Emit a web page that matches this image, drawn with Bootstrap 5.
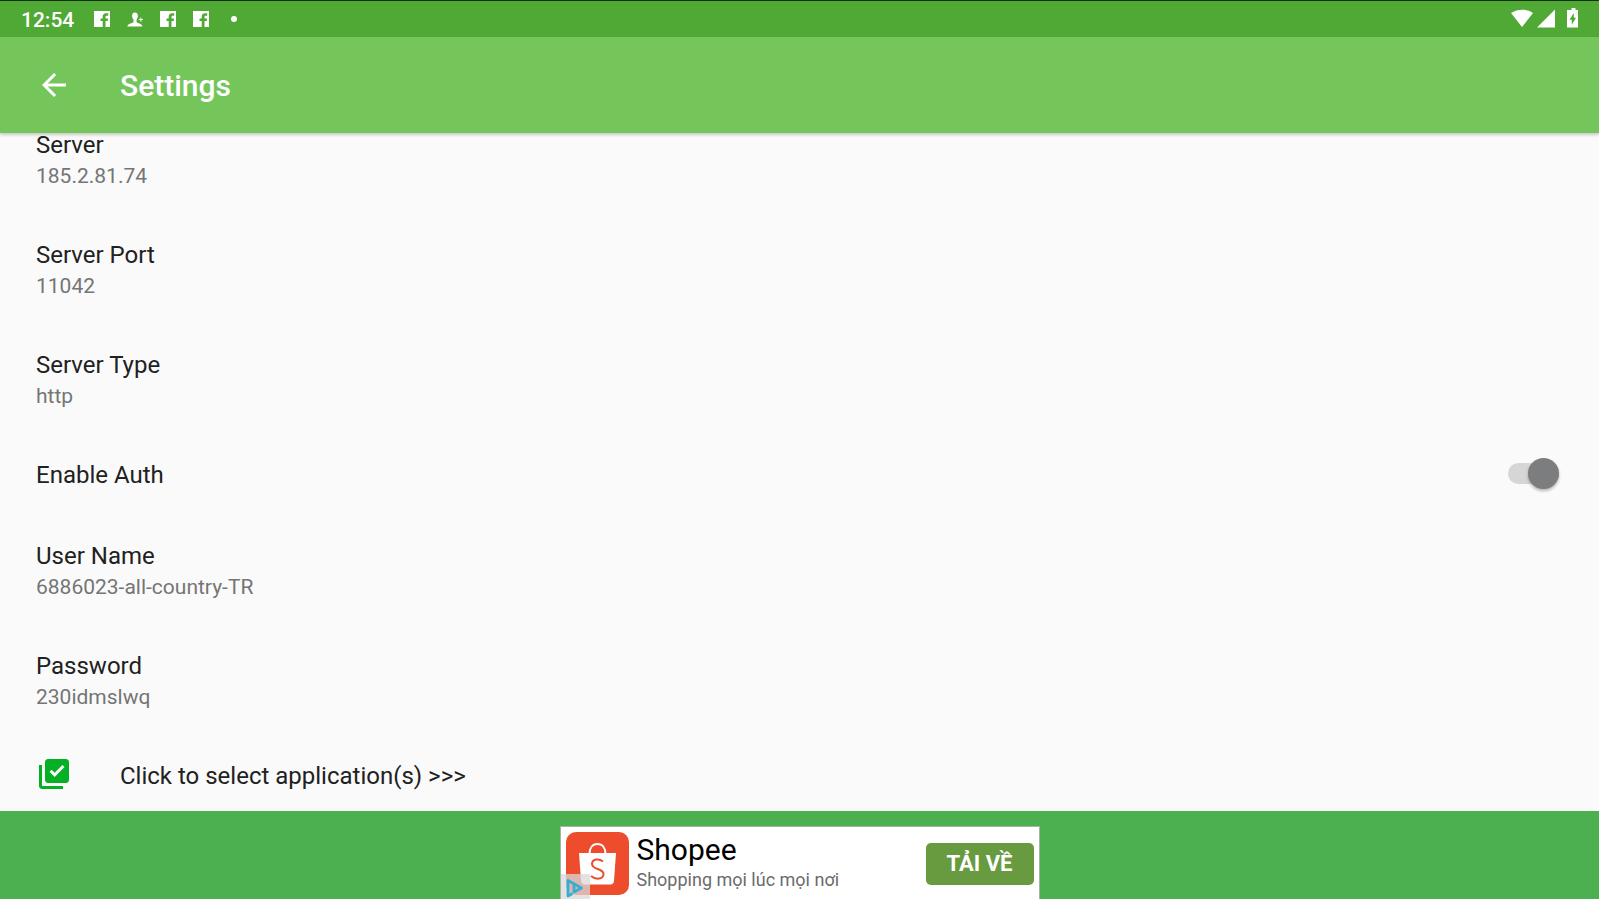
<!DOCTYPE html>
<html lang="en">
<head>
<meta charset="utf-8">
<meta name="viewport" content="width=device-width, initial-scale=1">
<title>Settings</title>
<link href="https://cdn.jsdelivr.net/npm/bootstrap@5.3.0/dist/css/bootstrap.min.css" rel="stylesheet">
<style>
  body { font-family: Roboto, "Noto Sans", sans-serif; background: #fafafa; color: #212121; }
  .status-bar { height: 37px; padding: 0 20px 0 21px; background: #50a835; border-top: 1px solid #16300f; color: #fff; }
  .clock { font-size: 21px; line-height: 34px; padding-top: 2px; font-weight: 500; width: 73px; }
  .notices { gap: 17px; }
  .app-bar { height: 96px; padding: 0 36px; gap: 48px; background: #74c65b; color: #fff; box-shadow: 0 2px 3px rgba(0,0,0,.2); z-index: 1; }
  .app-bar h1 { font-size: 30px; line-height: 36px; padding-top: 2px; font-weight: 500; }
  .icon-btn { width: 36px; height: 36px; color: #fff; }
  .prefs { gap: 48px; padding: 0 40px 0 36px; }
  .pref-title { font-size: 24px; line-height: 24px; color: #212121; }
  .pref-value { font-size: 21px; line-height: 38px; color: #757575; }
  .pref-toggle { height: 33px; }
  .toggle { appearance: none; position: relative; width: 51px; height: 21px; border-radius: 11px; background: #d6d6d6; margin: 0; }
  .toggle::before { content: ""; position: absolute; right: 0; top: -5px; width: 31px; height: 31px; border-radius: 50%; background: #7b7d7e; box-shadow: 0 2px 3px rgba(0,0,0,.28); }
  .pref-link { gap: 48px; margin-top: -8px; }
  .pref-link .pref-title { padding-top: 4px; }
  .ad-strip { height: 88px; padding-top: 15px; background: #4caf50; }
  .ad { width: 480px; background: #fff; border: 1px solid #a5b5a5; border-bottom: 0; padding: 5px 5px 0; gap: 8px; }
  .ad-name { font-size: 30px; line-height: 36px; color: #000; }
  .ad-text { font-size: 18px; line-height: 24px; color: #6b6b6b; }
  .ad-btn { width: 108px; height: 42px; margin-top: 11px; padding: 0; border-radius: 5px; background: #689a40; color: #fff; font-size: 22px; line-height: 40px; font-weight: 700; }
  .ad-mark { left: 0; bottom: 0; }
</style>
</head>
<body class="vh-100 d-flex flex-column overflow-hidden">
<svg class="d-none">
  <symbol id="fb" viewBox="0 0 16 16"><path fill="#fff" d="M0 0h16v16h-4.500V10h2.200l.4-2.600h-2.600V6c0-.8.4-1.300 1.300-1.300h1.400V2.200h-2C9.900 2.200 8.700 3.600 8.700 5.700v1.700H6.500V10h2.200v6H0z"/></symbol>
</svg>
<div class="status-bar flex-shrink-0 d-flex align-items-center justify-content-between">
  <div class="d-flex align-items-center">
    <span class="clock">12:54</span>
    <div class="notices d-flex align-items-center">
      <svg width="16" height="16"><use href="#fb"/></svg>
      <svg width="16" height="16" viewBox="0 0 16 16" fill="#fff"><path d="M8 1.500c2 0 3 1.600 2.900 3.500-.1 1.500-.7 2.700-1.300 3.500V11c.4 1.200 5.600 1.500 5.900 4.500H.3c.3-3 5.700-3.300 6.200-4.500V8.500C5.700 7.700 5.200 6.500 5.100 5 5 3.100 6 1.500 8 1.500zM13.400 6.500h1v1.600H16v1h-1.600v1.600h-1V9.100h-1.600v-1h1.600z"/></svg>
      <svg width="16" height="16"><use href="#fb"/></svg>
      <svg width="16" height="16"><use href="#fb"/></svg>
      <svg width="16" height="16" viewBox="0 0 16 16"><circle cx="8" cy="8" r="3" fill="#fff"/></svg>
    </div>
  </div>
  <svg width="68" height="22" viewBox="0 0 68 22" fill="#fff"><path d="M0 5C6.500.5 15.500.5 22 5L11 19zM44 1.500v18H26zM60.500 0h4v2h2.500v17.500H56V2h4.500zM62.800 5l-4.300 6.700h2.300v5l4.200-7h-2.200z" fill-rule="evenodd"/></svg>
</div>
<header class="app-bar flex-shrink-0 d-flex align-items-center position-relative">
  <button type="button" class="icon-btn btn p-0 border-0 d-flex" aria-label="Back"><svg width="36" height="36" viewBox="0 0 24 24" fill="currentColor"><path d="M20 11H7.830l5.590-5.590L12 4l-8 8 8 8 1.410-1.410L7.830 13H20v-2z"/></svg></button>
  <h1 class="m-0">Settings</h1>
</header>
<main class="flex-fill">
  <ul class="prefs list-unstyled m-0 d-flex flex-column">
    <li><div class="pref-title">Server</div><div class="pref-value">185.2.81.74</div></li>
    <li><div class="pref-title">Server Port</div><div class="pref-value">11042</div></li>
    <li><div class="pref-title">Server Type</div><div class="pref-value">http</div></li>
    <li class="pref-toggle d-flex justify-content-between align-items-start">
      <label class="pref-title" for="auth">Enable Auth</label>
      <input class="toggle" type="checkbox" role="switch" id="auth" checked>
    </li>
    <li><div class="pref-title">User Name</div><div class="pref-value">6886023-all-country-TR</div></li>
    <li><div class="pref-title">Password</div><div class="pref-value">230idmslwq</div></li>
    <li><a href="#" class="pref-link d-flex align-items-center text-decoration-none">
      <svg width="36" height="36" viewBox="0 0 24 24" fill="#06b025"><path d="M20 2H8c-1.100 0-2 .9-2 2v12c0 1.100.9 2 2 2h12c1.100 0 2-.9 2-2V4c0-1.100-.9-2-2-2zm-7.530 12L9 10.500l1.400-1.410 2.070 2.080L17.600 6 19 7.410 12.470 14zM4 6H2v14c0 1.100.9 2 2 2h14v-2H4V6z"/></svg>
      <span class="pref-title">Click to select application(s) &gt;&gt;&gt;</span></a></li>
  </ul>
</main>
<footer class="ad-strip flex-shrink-0 d-flex justify-content-center">
  <div class="ad d-flex align-items-start position-relative">
    <svg class="flex-shrink-0" width="63" height="63" viewBox="0 0 63 63"><rect width="63" height="63" rx="10" fill="#ee4d2d"/><path d="M13 21h37l-2 28c-.2 2-1.500 3.500-3.500 3.500h-26c-2 0-3.300-1.500-3.500-3.500z" fill="#fff"/><path d="M23.500 22c0-6 3-10 8-10s8 4 8 10" fill="none" stroke="#fff" stroke-width="2"/><path d="M37 29.500c-4-3.500-11-2.500-11 2.500 0 6 11.500 4 11.500 10 0 5.500-8 6-12.500 2" fill="none" stroke="#ee4d2d" stroke-width="2"/></svg>
    <div class="flex-fill"><div class="ad-name">Shopee</div><div class="ad-text">Shopping mọi lúc mọi nơi</div></div>
    <button type="button" class="ad-btn btn border-0">TẢI VỀ</button>
    <svg class="ad-mark position-absolute" width="29" height="25" viewBox="0 0 29 25"><path d="M0 0h29v25H0z" fill="#d9d9d9" fill-opacity=".75"/><path d="M11.500 19.500L7 22V6.500L20.500 14 13 18V10" fill="none" stroke="#35afd0" stroke-width="2.800" stroke-linejoin="round"/></svg>
  </div>
</footer>
<script src="https://cdn.jsdelivr.net/npm/bootstrap@5.3.0/dist/js/bootstrap.bundle.min.js"></script>
</body>
</html>
